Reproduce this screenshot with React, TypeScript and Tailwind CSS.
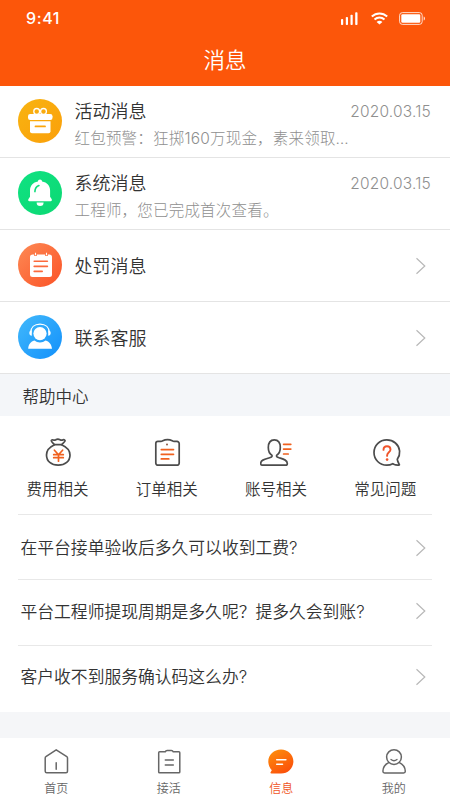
import React from 'react';

interface IconProps {
  className?: string;
}

const GiftIcon = () => (
  <svg className="w-11 h-11 shrink-0" viewBox="0 0 44 44" fill="none">
    <defs>
      <linearGradient id="gift" x1="0" y1="0" x2="1" y2="1">
        <stop offset="0" stopColor="#f8b411" />
        <stop offset="1" stopColor="#fb9f0a" />
      </linearGradient>
    </defs>
    <circle cx="22" cy="22" r="22" fill="url(#gift)" />
    <ellipse cx="18.7" cy="12.4" rx="2.9" ry="2.9" stroke="#fff" strokeWidth="1.3" />
    <ellipse cx="25.5" cy="12.4" rx="2.9" ry="2.9" stroke="#fff" strokeWidth="1.3" />
    <rect x="10" y="15" width="24.5" height="6" rx="2.2" fill="#fff" />
    <path d="M12 22.3h20.5v10a2 2 0 0 1-2 2H14a2 2 0 0 1-2-2z" fill="#fff" />
    <path d="M17.5 27.4h9.5" stroke="#fba50c" strokeWidth="1.8" strokeLinecap="round" />
  </svg>
);

const BellIcon = () => (
  <svg className="w-11 h-11 shrink-0" viewBox="0 0 44 44" fill="none">
    <defs>
      <linearGradient id="bell" x1="0" y1="0" x2="1" y2="1">
        <stop offset="0" stopColor="#10e282" />
        <stop offset="1" stopColor="#0cd873" />
      </linearGradient>
    </defs>
    <circle cx="22" cy="22" r="22" fill="url(#bell)" />
    <path
      d="M22 8.6c1.2 0 2 .8 2.1 1.9 4.9.9 8 4.300 8 9v6.200l1.500 2.400c.6 1 .2 2.100-.9 2.100H11.400c-1.200 0-1.500-1.200-.9-2.100l1.500-2.400v-6.200c0-4.700 3-8.100 7.900-9 .1-1.100.9-1.900 2.100-1.900z"
      fill="#fff"
    />
    <path d="M18.600 31.600h7a3.500 3.500 0 0 1-7 0z" fill="#fff" />
    <path d="M16.900 20.600c.1-3 1.500-5 4-6" stroke="#0edd7b" strokeWidth="1.600" strokeLinecap="round" />
  </svg>
);

const PenaltyIcon = () => (
  <svg className="w-11 h-11 shrink-0" viewBox="0 0 44 44" fill="none">
    <defs>
      <linearGradient id="penalty" x1="0" y1="0" x2="1" y2="1">
        <stop offset="0" stopColor="#fd8a55" />
        <stop offset="1" stopColor="#fb5226" />
      </linearGradient>
    </defs>
    <circle cx="22" cy="22" r="22" fill="url(#penalty)" />
    <rect x="12" y="11.5" width="22" height="22.5" rx="2.5" fill="#fff" />
    <path d="M17.5 11v2M28.5 11v2" stroke="#fc7444" strokeWidth="2.6" />
    <path d="M17.5 9.8v2.4M28.5 9.8v2.4" stroke="#fff" strokeWidth="1.1" />
    <path d="M16.2 18.3h13.2M16.2 23.4h13.2M16.2 28.4h8" stroke="#fb6a3d" strokeWidth="1.6" strokeLinecap="round" />
  </svg>
);

const ServiceIcon = () => (
  <svg className="w-11 h-11 shrink-0" viewBox="0 0 44 44" fill="none">
    <defs>
      <linearGradient id="service" x1="0" y1="0" x2="1" y2="1">
        <stop offset="0" stopColor="#42b9fb" />
        <stop offset="1" stopColor="#1290fb" />
      </linearGradient>
    </defs>
    <circle cx="22" cy="22" r="22" fill="url(#service)" />
    <circle cx="22" cy="18.6" r="6.600" fill="#fff" />
    <path d="M12.6 18c0-5.600 3.800-8.900 9.400-8.900s9.400 3.300 9.400 8.900" stroke="#fff" strokeWidth="1.2" />
    <path d="M13.800 15.200v5.600c-1.600 0-2.500-1.200-2.500-2.800s.9-2.800 2.500-2.800zM30.200 15.200v5.600c1.600 0 2.500-1.200 2.500-2.800s-.9-2.800-2.500-2.800z" fill="#fff" />
    <path d="M10.200 33.700c.3-4 1.800-6.700 6.300-8.200 1.500 1.300 3.300 1.900 5.500 1.900s4-.6 5.500-1.900c4.500 1.500 6 4.200 6.500 8.200z" fill="#fff" />
  </svg>
);

const Chevron: React.FC<IconProps> = ({ className = '' }) => (
  <svg className={`w-3 h-[18px] shrink-0 ${className}`} viewBox="0 0 12 18" fill="none">
    <path d="M1.500 1.200L9.800 9l-8.300 7.800" stroke="#b8b8b8" strokeWidth="1.200" />
  </svg>
);

const MoneyBagIcon = () => (
  <svg className="w-8 h-8" viewBox="0 0 32 32" fill="none" stroke="#4c4c4c" strokeWidth="1.7" strokeLinejoin="round" strokeLinecap="round">
    <path d="M12.500 7.700C11.300 6.300 9.600 5 9.300 3.900c-.2-1 1-1.300 2-.9 1 .4 1.600.3 2.400-.2 1.300-.9 3-.9 4.300-.1 1 .6 2 .6 3 .2 1.200-.5 2.400.1 2 1.100-.5 1.300-2.300 2.300-3.400 3.700z" />
    <path d="M12.500 7.700C7.500 10 4.500 13.600 4.500 18c0 6.300 4.800 10.200 11.700 10.200S28 24.300 28 18c0-4.400-3.300-8-8.400-10.300" />
    <path d="M12.400 13.200l4.100 4.500 4.100-4.500M11.700 17.700h9.600M11.700 20.700h9.600M16.500 17.700v6.500" stroke="#f0611f" />
  </svg>
);

const OrderIcon = () => (
  <svg className="w-8 h-8" viewBox="0 0 32 32" fill="none" stroke="#4c4c4c" strokeWidth="1.7" strokeLinejoin="round" strokeLinecap="round">
    <path d="M7 4.400h3c1.700 0 2.300-1.800 6.500-1.800S21.300 4.400 23 4.400h3a2.200 2.200 0 0 1 2.200 2.200V26a2.200 2.200 0 0 1-2.200 2.200H7A2.200 2.200 0 0 1 4.800 26V6.600A2.200 2.200 0 0 1 7 4.400z" />
    <circle cx="16" cy="7.600" r="1" fill="#8a5a44" stroke="none" />
    <path d="M10.300 12.600h12.200M10.300 17.300h12.200M10.300 21.900h7.500" stroke="#f0611f" />
  </svg>
);

const AccountIcon = () => (
  <svg className="w-8 h-8" viewBox="0 0 32 32" fill="none" stroke="#4c4c4c" strokeWidth="1.7" strokeLinejoin="round" strokeLinecap="round">
    <path d="M11.900 18.300c-2.700-1.600-3.600-4.500-3.600-7.700 0-4.700 2.200-7.700 6-7.700s6 3 6 7.700c0 3.200-.9 6.100-3.600 7.700-.6 1.600.6 2 2.300 2.500 4.200 1.200 8.300 1.900 8.300 5.600 0 1.300-.6 1.800-1.600 1.800H2.300c-1 0-1.600-.5-1.600-1.800 0-3.700 4.700-4.400 8.900-5.600 1.700-.5 2.900-.9 2.300-2.500z" />
    <path d="M23.600 7.300h7.200M23.600 12.100h7.200M23.600 17h4.600" stroke="#f0611f" />
  </svg>
);

const QuestionIcon = () => (
  <svg className="w-8 h-8" viewBox="0 0 32 32" fill="none" stroke="#4c4c4c" strokeWidth="1.7" strokeLinejoin="round" strokeLinecap="round">
    <path d="M28.300 22.300c1.700-2.400 2.600-5.300 2.300-8.300C29.900 7.500 24.400 2.900 17.800 2.900 10.500 2.900 5 8.500 5 15.500s5.500 12.700 12.800 12.700c2.200 0 4.200-.5 6-1.500l1.600.9c1.200.6 2.600.5 4.300.6.7 0 .9-.4.5-1-.9-1.500-1.700-3.100-1.900-4.900z" />
    <path d="M14.500 12.900c0-2.200 1.400-3.600 3.500-3.600s3.500 1.400 3.500 3.300c0 2.600-3.400 2.900-3.400 5.800v.5" stroke="#f0542a" strokeWidth="1.9" />
    <circle cx="18.100" cy="22.600" r="1.300" fill="#f0542a" stroke="none" />
  </svg>
);

const HomeIcon = () => (
  <svg className="w-7 h-7" viewBox="0 0 28 28" fill="none" stroke="#666" strokeWidth="1.5" strokeLinejoin="round" strokeLinecap="round">
    <path d="M14.200 1.800l10.600 6.900c.5.300.7.700.7 1.300v13.300c0 .9-.5 1.500-1.500 1.500H4.700c-.9 0-1.500-.5-1.500-1.500V10c0-.6.200-1 .7-1.300z" />
    <path d="M14.200 14.700v6.500" />
  </svg>
);

const JobsIcon = () => (
  <svg className="w-7 h-7" viewBox="0 0 28 28" fill="none" stroke="#666" strokeWidth="1.5" strokeLinejoin="round" strokeLinecap="round">
    <path d="M4.600 3.800h5.700c.3-.9.900-1.400 1.800-1.400h4.300c.9 0 1.500.5 1.800 1.400h5.700c.6 0 .9.300.9.900v19.200c0 .6-.3.900-.9.900H4.600c-.6 0-.9-.3-.9-.9V4.700c0-.6.300-.9.900-.9z" />
    <path d="M10.300 12.100h8M10.300 16.900h8" />
  </svg>
);

const MessageIcon = () => (
  <svg className="w-7 h-7" viewBox="0 0 28 28" fill="none">
    <defs>
      <linearGradient id="message" x1="0" y1="0" x2=".6" y2="1">
        <stop offset="0" stopColor="#fe920b" />
        <stop offset="1" stopColor="#fb520b" />
      </linearGradient>
    </defs>
    <path d="M14 1.400c7 0 12.400 5.100 12.400 11.900S21 25.600 14 25.600H4.500c-1 0-1.300-.8-.8-1.500l1.100-1.900C2.700 20 1.300 17 1.300 13.500 1.300 6.500 7 1.400 14 1.400z" fill="url(#message)" />
    <path d="M9.700 11.700h9.200M9.700 16.200h5.800" stroke="#fff" strokeWidth="1.500" strokeLinecap="round" />
  </svg>
);

const MineIcon = () => (
  <svg className="w-7 h-7" viewBox="0 0 28 28" fill="none" stroke="#666" strokeWidth="1.5" strokeLinejoin="round" strokeLinecap="round">
    <circle cx="14" cy="9.100" r="7.400" />
    <path d="M8.700 14.600c-3.400 1.600-5.600 4.700-5.800 8.600 0 1.100.6 1.700 1.700 1.700h19c1.100 0 1.700-.6 1.700-1.700-.2-3.900-2.500-7-5.900-8.600" />
    <path d="M11 11.500c1.700 1.400 4.300 1.400 6 0" strokeWidth="1.3" />
  </svg>
);

const MESSAGES = [
  { id: 'activity', title: '活动消息', desc: '红包预警：狂掷160万现金，素来领取…', date: '2020.03.15', icon: GiftIcon },
  { id: 'system', title: '系统消息', desc: '工程师，您已完成首次查看。', date: '2020.03.15', icon: BellIcon },
  { id: 'penalty', title: '处罚消息', icon: PenaltyIcon },
  { id: 'service', title: '联系客服', icon: ServiceIcon },
];

const CATEGORIES = [
  { id: 'fee', label: '费用相关', icon: MoneyBagIcon },
  { id: 'order', label: '订单相关', icon: OrderIcon },
  { id: 'account', label: '账号相关', icon: AccountIcon },
  { id: 'faq', label: '常见问题', icon: QuestionIcon },
];

const QUESTIONS = [
  '在平台接单验收后多久可以收到工费?',
  '平台工程师提现周期是多久呢？提多久会到账?',
  '客户收不到服务确认码这么办?',
];

const TABS = [
  { id: 'home', label: '首页', icon: HomeIcon },
  { id: 'jobs', label: '接活', icon: JobsIcon },
  { id: 'message', label: '信息', icon: MessageIcon },
  { id: 'mine', label: '我的', icon: MineIcon },
];

const StatusBar = () => (
  <div className="h-9 pl-[26px] pr-6 flex items-center justify-between">
    <span className="text-base leading-none font-medium tracking-[0.6px]">9:41</span>
    <div className="flex items-center gap-[13px] pt-px">
      <svg className="w-[17px] h-[13px]" viewBox="0 0 17 13" fill="currentColor">
        <rect x="0" y="7" width="2.2" height="6" rx=".8" />
        <rect x="4.8" y="5" width="2.2" height="8" rx=".8" />
        <rect x="9.5" y="2.8" width="2.2" height="10.2" rx=".8" />
        <rect x="14.2" y="0.3" width="2.3" height="12.7" rx=".8" />
      </svg>
      <svg className="w-[17px] h-[13px]" viewBox="0 0 17 13" fill="none" stroke="currentColor" strokeWidth="2">
        <path d="M.8 4.600c4.500-4.200 10.900-4.200 15.400 0" />
        <path d="M3.500 7.600c3-2.700 7-2.700 10 0" />
        <path d="M8.500 12.600L5.600 9.900c1.700-1.500 4.100-1.500 5.800 0z" fill="currentColor" stroke="none" />
      </svg>
      <svg className="w-[27px] h-[13px] -ml-0.5" viewBox="0 0 27 13" fill="none">
        <rect x=".6" y=".6" width="22.6" height="11.8" rx="2.8" stroke="currentColor" strokeWidth="1" opacity=".8" />
        <rect x="2.3" y="2.3" width="19" height="8.4" rx="1.3" fill="currentColor" />
        <path d="M24.700 4.500c1.700.5 1.700 3.500 0 4z" fill="currentColor" opacity=".8" />
      </svg>
    </div>
  </div>
);

export default function App() {
  return (
    <div className="w-[450px] h-[800px] flex flex-col overflow-hidden bg-white text-[#333] font-[350] font-['Inter','Noto_Sans_CJK_SC',sans-serif]">
      <header className="h-[86px] shrink-0 bg-[#fc560a] text-white">
        <StatusBar />
        <h1 className="h-12 flex items-center justify-center text-[21.5px] font-[350]">消息</h1>
      </header>

      <ul>
        {MESSAGES.map((item) => (
          <li key={item.id} className="h-[72px] px-[18px] pt-[13px] flex items-start border-b border-[#e4e4e4]">
            <item.icon />
            <div className={`ml-[12.5px] flex-1 ${item.desc ? '-mt-[1.5px]' : 'pt-2.5'}`}>
              <div className="flex items-center justify-between">
                <h2 className="text-lg leading-7 font-[350]">{item.title}</h2>
                {item.date ? (
                  <span className="mr-px pt-px text-[15.5px] leading-[26px] tracking-[0.2px] font-light text-[#8f8f8f]">
                    {item.date}
                  </span>
                ) : (
                  <Chevron className="mr-[5px] -mt-[3px]" />
                )}
              </div>
              {item.desc && (
                <p className="text-[15.5px] leading-[26px] tracking-[0.2px] font-light text-[#8f8f8f]">{item.desc}</p>
              )}
            </div>
          </li>
        ))}
      </ul>

      <h3 className="h-[42px] shrink-0 pl-[22.5px] pt-1 flex items-center bg-[#f4f6f9] text-[16.5px] font-[350]">帮助中心</h3>

      <section>
        <div className="h-[98px] pt-[21px] pl-[3px] pr-2.5 grid grid-cols-4">
          {CATEGORIES.map((item) => (
            <div key={item.id} className="flex flex-col items-center">
              <item.icon />
              <span className="mt-[9px] text-[15.5px] leading-6">{item.label}</span>
            </div>
          ))}
        </div>
        <ul className="mx-[18px]">
          {QUESTIONS.map((question) => (
            <li key={question} className="h-[66px] pl-[2.5px] pr-1 flex items-center justify-between border-t border-[#e8e8e8] first:h-[65px] first:pt-1 last:h-[67px] last:pb-0.5">
              <span className="text-[16.8px] whitespace-nowrap">{question}</span>
              <Chevron className="mr-px -mt-[3px]" />
            </li>
          ))}
        </ul>
      </section>

      <div className="flex-1 bg-[#f5f6f8]" />

      <nav className="h-[62px] shrink-0 pt-2.5 grid grid-cols-4">
        {TABS.map((tab) => (
          <div key={tab.id} className="flex flex-col items-center">
            <tab.icon />
            <span className={`mt-[5px] text-xs leading-4 ${tab.id === 'message' ? 'text-[#f0541e]' : 'text-[#666]'}`}>
              {tab.label}
            </span>
          </div>
        ))}
      </nav>
    </div>
  );
}
